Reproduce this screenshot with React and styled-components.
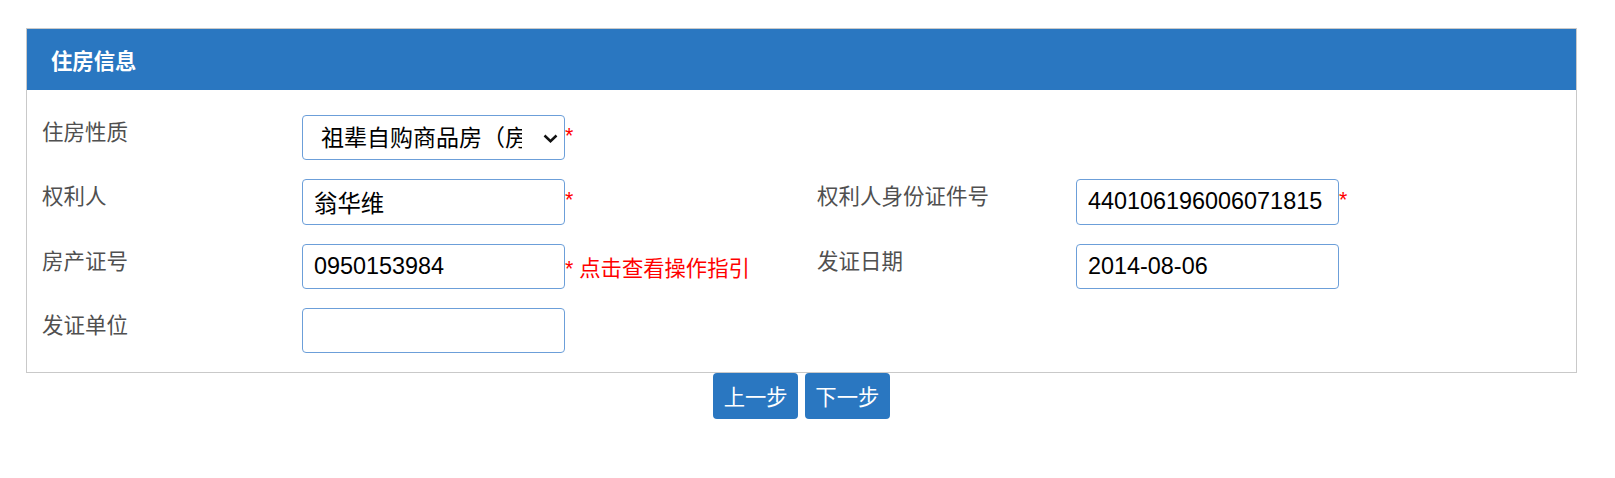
import React from "react";
import styled, { createGlobalStyle } from "styled-components";

const GlobalStyle = createGlobalStyle`
  * { box-sizing: border-box; }
  body {
    margin: 0;
    background: #fff;
    font-family: "Liberation Sans", "Noto Sans CJK SC", sans-serif;
  }
`;

const Page = styled.div`
  padding: 28px 0 0 26px;
  width: 1577px;
`;

const Panel = styled.section`
  width: 1551px;
  border: 1px solid #c9c9c9;
`;

const PanelHeading = styled.h3`
  margin: 0;
  height: 60.5px;
  display: flex;
  align-items: center;
  padding-left: 24px;
  background: #2a77c1;
  color: #fff;
  font-size: 21.33px;
  font-weight: bold;
  font-family: "Noto Sans CJK SC", sans-serif;
`;

const PanelBody = styled.div`
  padding: 25.5px 15px 18.5px;
  display: flex;
  flex-direction: column;
  gap: 19px;
`;

const FormRow = styled.div`
  display: grid;
  grid-template-columns: 260px 515px 259px 1fr;
  align-items: start;
`;

const Label = styled.label`
  font-family: "Noto Sans CJK SC", sans-serif;
  font-size: 21.5px;
  line-height: 30px;
  color: #505050;
  padding-top: 1px;
`;

const Field = styled.div`
  display: flex;
  align-items: center;
  height: 45.33px;
`;

const TextInput = styled.input`
  width: 263px;
  height: 45.33px;
  border: 1px solid #6c9fd9;
  border-radius: 4px;
  padding: 0 11px;
  font-family: "Liberation Sans", "Noto Sans CJK SC", sans-serif;
  font-size: 23.4px;
  color: #000;
  background: #fff;
  outline: none;
`;

const SelectWrap = styled.div`
  position: relative;
  width: 263px;
  height: 45.33px;
`;

const Select = styled.select`
  appearance: none;
  -webkit-appearance: none;
  width: 100%;
  height: 100%;
  border: 1px solid #6c9fd9;
  border-radius: 4px;
  padding: 0 42px 0 18px;
  font-family: "Liberation Sans", "Noto Sans CJK SC", sans-serif;
  font-size: 23px;
  color: #000;
  background: #fff;
  outline: none;
`;

const Chevron = styled.svg`
  position: absolute;
  right: 7px;
  top: 50%;
  margin-top: -4px;
  width: 15px;
  height: 9px;
  pointer-events: none;
`;

const Required = styled.span`
  color: #ff0000;
  font-size: 21.33px;
  white-space: pre;
  font-family: "Liberation Sans", "Noto Sans CJK SC", sans-serif;
  margin-top: -3px;
`;

const Hint = styled.span`
  color: #ff0000;
  font-size: 21.33px;
  white-space: pre;
  font-family: "Liberation Sans", "Noto Sans CJK SC", sans-serif;
`;

const ButtonBar = styled.div`
  width: 1551px;
  display: flex;
  justify-content: center;
  gap: 6.33px;
`;

const Button = styled.button`
  height: 46px;
  padding: 0 10.67px;
  border: none;
  border-radius: 4px;
  background: #2a77c1;
  color: #fff;
  font-family: "Noto Sans CJK SC", sans-serif;
  font-size: 21.33px;
  cursor: pointer;
`;

const Empty = styled.div``;

export default function App() {
  return (
    <>
      <GlobalStyle />
      <Page>
        <Panel>
          <PanelHeading>住房信息</PanelHeading>
          <PanelBody>
            <FormRow>
              <Label>住房性质</Label>
              <Field>
                <SelectWrap>
                  <Select defaultValue="1">
                    <option value="1">祖辈自购商品房（房改房）</option>
                  </Select>
                  <Chevron viewBox="0 0 15 9">
                    <polyline
                      points="1.5,1.5 7.5,7.2 13.5,1.5"
                      fill="none"
                      stroke="#111"
                      strokeWidth="2.5"
                    />
                  </Chevron>
                </SelectWrap>
                <Required>*</Required>
              </Field>
              <Empty />
              <Empty />
            </FormRow>
            <FormRow>
              <Label>权利人</Label>
              <Field>
                <TextInput defaultValue="翁华维" />
                <Required>*</Required>
              </Field>
              <Label>权利人身份证件号</Label>
              <Field>
                <TextInput defaultValue="440106196006071815" />
                <Required>*</Required>
              </Field>
            </FormRow>
            <FormRow>
              <Label>房产证号</Label>
              <Field>
                <TextInput defaultValue="0950153984" />
                <Hint>* 点击查看操作指引</Hint>
              </Field>
              <Label>发证日期</Label>
              <Field>
                <TextInput defaultValue="2014-08-06" />
              </Field>
            </FormRow>
            <FormRow>
              <Label>发证单位</Label>
              <Field>
                <TextInput defaultValue="" />
              </Field>
              <Empty />
              <Empty />
            </FormRow>
          </PanelBody>
        </Panel>
        <ButtonBar>
          <Button type="button">上一步</Button>
          <Button type="button">下一步</Button>
        </ButtonBar>
      </Page>
    </>
  );
}
